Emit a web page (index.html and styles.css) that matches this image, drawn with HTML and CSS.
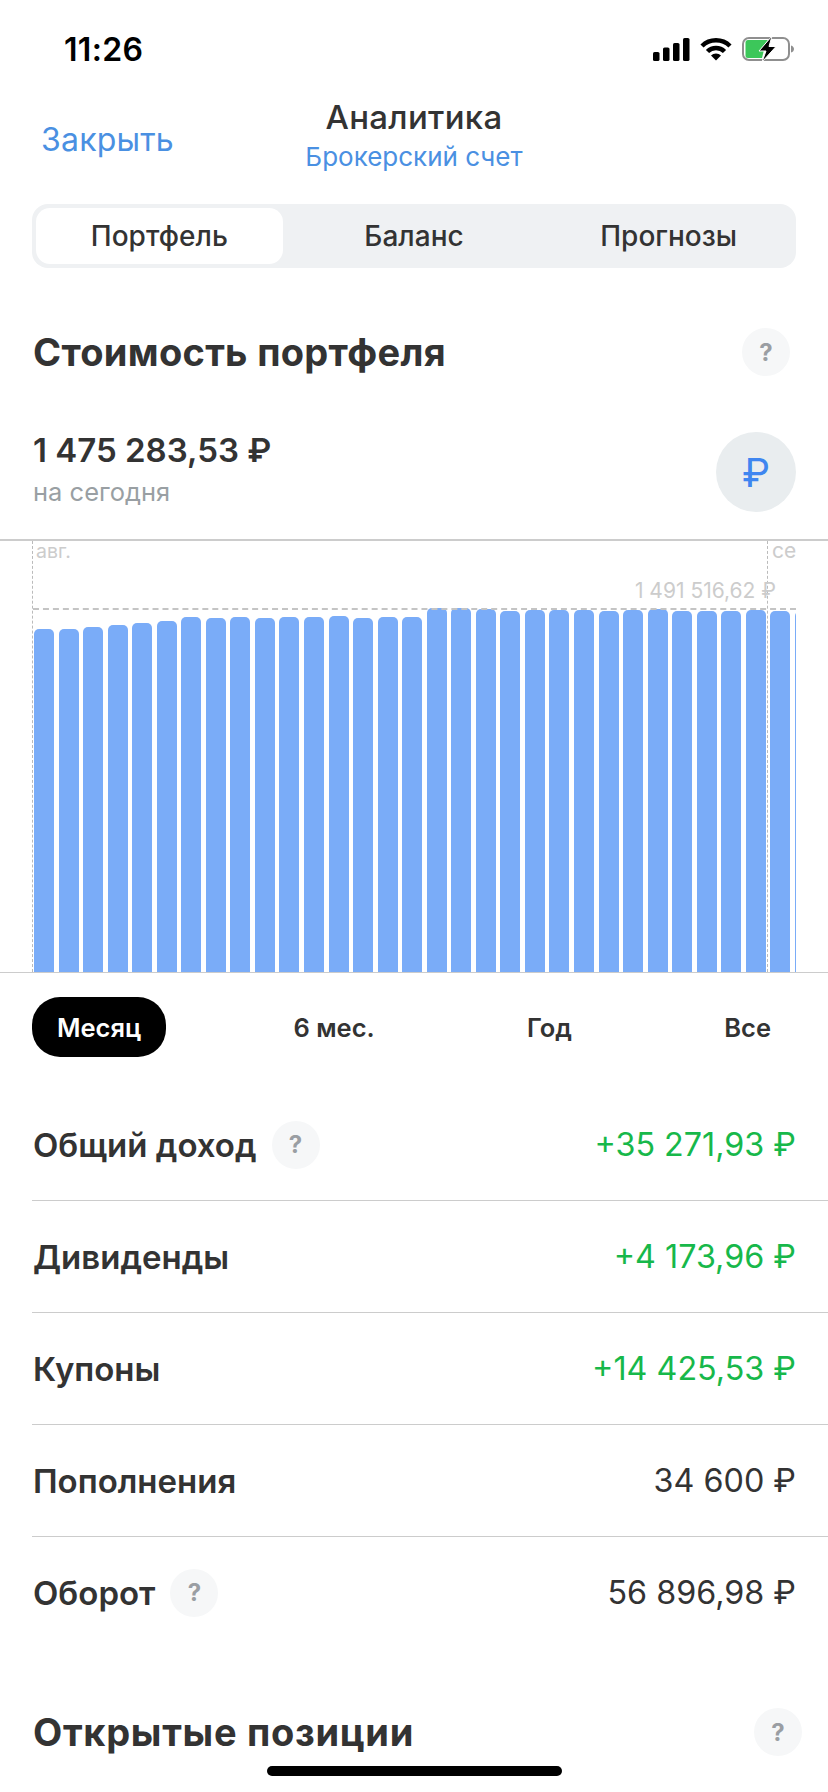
FILE: index.html
```html
<!DOCTYPE html>
<html lang="ru">
<head>
    <meta charset="UTF-8">
    <meta name="viewport" content="width=device-width, initial-scale=1.0">
    <title>Аналитика</title>
    <link rel="stylesheet" href="styles.css">
</head>
<body>

<div class="status">
    <span class="time">11:26</span>
    <div class="status-icons">
        <svg width="37" height="23" viewBox="0 0 37 23">
            <rect x="0" y="14" width="6.5" height="9" rx="1.6" fill="#000"/>
            <rect x="10" y="9.5" width="6.5" height="13.5" rx="1.6" fill="#000"/>
            <rect x="20" y="5" width="6.5" height="18" rx="1.6" fill="#000"/>
            <rect x="30" y="0" width="6.5" height="23" rx="1.6" fill="#000"/>
        </svg>
        <svg width="32" height="24" viewBox="0 0 32 24">
            <path d="M2 9 A20 20 0 0 1 30 9" fill="none" stroke="#000" stroke-width="4.5"/>
            <path d="M7.5 14.5 A12 12 0 0 1 24.5 14.5" fill="none" stroke="#000" stroke-width="4.5"/>
            <path d="M11 18.5 A7 7 0 0 1 21 18.5 L16 23.5 Z" fill="#000"/>
        </svg>
        <svg width="52" height="26" viewBox="0 0 52 26">
            <rect x="1" y="2" width="46" height="22" rx="6" fill="none" stroke="#8f8f8f" stroke-width="2"/>
            <path d="M49 9.5 C51 10 52 11.5 52 13 C52 14.5 51 16 49 16.5 Z" fill="#8f8f8f"/>
            <path d="M6 4 H26 L18 14 H22 L20 22 H6 Q3.500 22 3.500 19.500 V6.500 Q3.500 4 6 4 Z" fill="#3cc75a"/>
            <path d="M30 0 L17 15 H24 L20 26 L34 10.500 H27 Z" fill="#000" stroke="#fff" stroke-width="1"/>
        </svg>
    </div>
</div>

<div class="nav">
    <a class="nav-close">Закрыть</a>
    <div class="nav-title">
        <h1>Аналитика</h1>
        <p>Брокерский счет</p>
    </div>
</div>

<div class="segment">
    <div class="segment-item active">Портфель</div>
    <div class="segment-item">Баланс</div>
    <div class="segment-item">Прогнозы</div>
</div>

<div class="section-head">
    <h2>Стоимость портфеля</h2>
    <span class="help">?</span>
</div>

<div class="summary">
    <div>
        <div class="summary-value">1 475 283,53 ₽</div>
        <div class="summary-label">на сегодня</div>
    </div>
    <div class="currency">₽</div>
</div>

<div class="chart">
    <div class="bars">
        <div class="bar" style="height: 343px"></div>
        <div class="bar" style="height: 343px"></div>
        <div class="bar" style="height: 345px"></div>
        <div class="bar" style="height: 347px"></div>
        <div class="bar" style="height: 349px"></div>
        <div class="bar" style="height: 351px"></div>
        <div class="bar" style="height: 355px"></div>
        <div class="bar" style="height: 354px"></div>
        <div class="bar" style="height: 355px"></div>
        <div class="bar" style="height: 354px"></div>
        <div class="bar" style="height: 355px"></div>
        <div class="bar" style="height: 355px"></div>
        <div class="bar" style="height: 356px"></div>
        <div class="bar" style="height: 354px"></div>
        <div class="bar" style="height: 355px"></div>
        <div class="bar" style="height: 355px"></div>
        <div class="bar" style="height: 364px"></div>
        <div class="bar" style="height: 364px"></div>
        <div class="bar" style="height: 363px"></div>
        <div class="bar" style="height: 361px"></div>
        <div class="bar" style="height: 362px"></div>
        <div class="bar" style="height: 362px"></div>
        <div class="bar" style="height: 362px"></div>
        <div class="bar" style="height: 361px"></div>
        <div class="bar" style="height: 362px"></div>
        <div class="bar" style="height: 363px"></div>
        <div class="bar" style="height: 361px"></div>
        <div class="bar" style="height: 361px"></div>
        <div class="bar" style="height: 361px"></div>
        <div class="bar" style="height: 362px"></div>
        <div class="bar" style="height: 361px"></div>
        <div class="bar" style="height: 361px"></div>
    </div>
    <div class="guide guide-left"></div>
    <div class="guide guide-right"></div>
    <div class="guide-max"></div>
    <span class="chart-month month-aug">авг.</span>
    <span class="chart-month month-sep">се</span>
    <span class="chart-max">1 491 516,62 ₽</span>
</div>

<div class="range">
    <div class="range-item active">Месяц</div>
    <div class="range-item">6 мес.</div>
    <div class="range-item">Год</div>
    <div class="range-item">Все</div>
</div>

<div class="rows">
    <div class="row">
        <div class="row-label">Общий доход <span class="help">?</span></div>
        <div class="row-value green">+35 271,93 ₽</div>
    </div>
    <div class="row">
        <div class="row-label">Дивиденды</div>
        <div class="row-value green">+4 173,96 ₽</div>
    </div>
    <div class="row">
        <div class="row-label">Купоны</div>
        <div class="row-value green">+14 425,53 ₽</div>
    </div>
    <div class="row">
        <div class="row-label">Пополнения</div>
        <div class="row-value">34 600 ₽</div>
    </div>
    <div class="row">
        <div class="row-label">Оборот <span class="help">?</span></div>
        <div class="row-value">56 896,98 ₽</div>
    </div>
</div>

<div class="section-head section-head-last">
    <h2>Открытые позиции</h2>
    <span class="help">?</span>
</div>

<div class="home-indicator"></div>

</body>
</html>
```

FILE: styles.css
```css
* {
    box-sizing: border-box;
}
html, body {
    height: 1792px;
    overflow: hidden;
}
body {
    margin: 0;
    padding: 0;
    position: relative;
    background-color: #fff;
    color: #333;
    font-family: Inter, 'Noto Sans', sans-serif;
}
h1, h2, p {
    margin: 0;
}

/* status bar */
.status {
    height: 98px;
    padding: 0 34px 0 64px;
    display: flex;
    justify-content: space-between;
    align-items: center;
}
.time {
    font-size: 32px;
    font-weight: 600;
    color: #000;
    letter-spacing: 0.3px;
}
.status-icons {
    display: flex;
    align-items: center;
    gap: 10px;
}

/* nav */
.nav {
    height: 106px;
    position: relative;
    padding-left: 41px;
}
.nav-close {
    display: block;
    padding-top: 24px;
    font-size: 32px;
    line-height: 36px;
    letter-spacing: 0.2px;
    color: #4a90e2;
}
.nav-title {
    position: absolute;
    top: 0;
    left: 0;
    right: 0;
    text-align: center;
}
.nav-title h1 {
    font-size: 33px;
    line-height: 38px;
    font-weight: 500;
    letter-spacing: 0.3px;
}
.nav-title p {
    font-size: 26px;
    line-height: 42px;
    color: #4a90e2;
}

/* tabs */
.segment {
    margin: 0 32px;
    height: 64px;
    padding: 4px;
    display: grid;
    grid-template-columns: repeat(3, 1fr);
    gap: 8px;
    background-color: #eff1f3;
    border-radius: 16px;
}
.segment-item {
    display: flex;
    justify-content: center;
    align-items: center;
    font-size: 28px;
    font-weight: 500;
    border-radius: 14px;
}
.segment-item.active {
    background-color: #fff;
}

/* headings */
.section-head {
    margin-top: 60px;
    height: 48px;
    padding: 0 38px 0 33px;
    display: flex;
    justify-content: space-between;
    align-items: center;
}
.section-head h2 {
    font-size: 38px;
    font-weight: 700;
    letter-spacing: 0.3px;
}
.section-head-last {
    padding-right: 26px;
}
.section-head-last h2 {
    letter-spacing: 0.7px;
}
.help {
    width: 48px;
    height: 48px;
    display: inline-flex;
    flex: none;
    justify-content: center;
    align-items: center;
    border-radius: 50%;
    background-color: #f6f7f8;
    color: #9a9ea3;
    font-size: 24px;
    font-weight: 700;
}

/* summary */
.summary {
    margin-top: 56px;
    padding: 0 32px 0 33px;
    height: 80px;
    display: flex;
    justify-content: space-between;
}
.summary-value {
    font-size: 33px;
    line-height: 36px;
    font-weight: 600;
}
.summary-label {
    margin-top: 6px;
    font-size: 25.5px;
    line-height: 36px;
    color: #999fa3;
}
.currency {
    width: 80px;
    height: 80px;
    display: flex;
    justify-content: center;
    align-items: center;
    border-radius: 50%;
    background-color: #e9edef;
    color: #3f86f0;
    font-size: 40px;
    font-weight: 400;
}

/* chart */
.chart {
    position: relative;
    margin-top: 27px;
    height: 434px;
    border-top: 2px solid #ccc;
    border-bottom: 1px solid #ccc;
    overflow: hidden;
}
.bars {
    position: absolute;
    left: 34px;
    right: 32px;
    bottom: 0;
    display: flex;
    align-items: flex-end;
    gap: 4.55px;
    overflow: hidden;
}
.bar {
    flex: none;
    width: 20px;
    background-color: #7aacf8;
    border-radius: 5px 5px 0 0;
}
.guide {
    position: absolute;
    top: 0;
    bottom: 0;
    width: 0;
    border-left: 1px dashed #bbb;
}
.guide-left {
    left: 32px;
}
.guide-right {
    left: 767px;
}
.guide-max {
    position: absolute;
    top: 67px;
    left: 33px;
    right: 32px;
    border-top: 2px dashed #c4c4c4;
}
.chart-month {
    position: absolute;
    top: -2px;
    font-size: 19.5px;
    line-height: 24px;
    color: #ccc;
}
.month-aug {
    left: 36px;
}
.month-sep {
    left: 772px;
    width: 24px;
    overflow: hidden;
    font-size: 21px;
}
.chart-max {
    position: absolute;
    top: 38px;
    right: 52px;
    font-size: 21px;
    line-height: 24px;
    color: #ccc;
}

/* period picker */
.range {
    margin: 24px 32px 0;
    height: 60px;
    display: flex;
    justify-content: space-between;
    align-items: center;
}
.range-item {
    height: 60px;
    padding: 0 25px;
    display: flex;
    align-items: center;
    font-size: 25.5px;
    font-weight: 600;
    border-radius: 28px;
}
.range-item.active {
    background-color: #000;
    color: #fff;
}

/* rows */
.rows {
    margin: 32px 0 0 32px;
}
.row {
    height: 112px;
    padding: 0 32px 0 1px;
    display: flex;
    justify-content: space-between;
    align-items: center;
    border-bottom: 1px solid #ccc;
}
.row:last-child {
    border-bottom: none;
    height: 111px;
}
.row-label {
    display: flex;
    align-items: center;
    gap: 15px;
    font-size: 33px;
    font-weight: 600;
}
.row-value {
    font-size: 32.3px;
}
.green {
    color: #17b84a;
}

.home-indicator {
    position: absolute;
    left: 267px;
    top: 1766px;
    width: 295px;
    height: 10px;
    border-radius: 5px;
    background-color: #000;
}
```
